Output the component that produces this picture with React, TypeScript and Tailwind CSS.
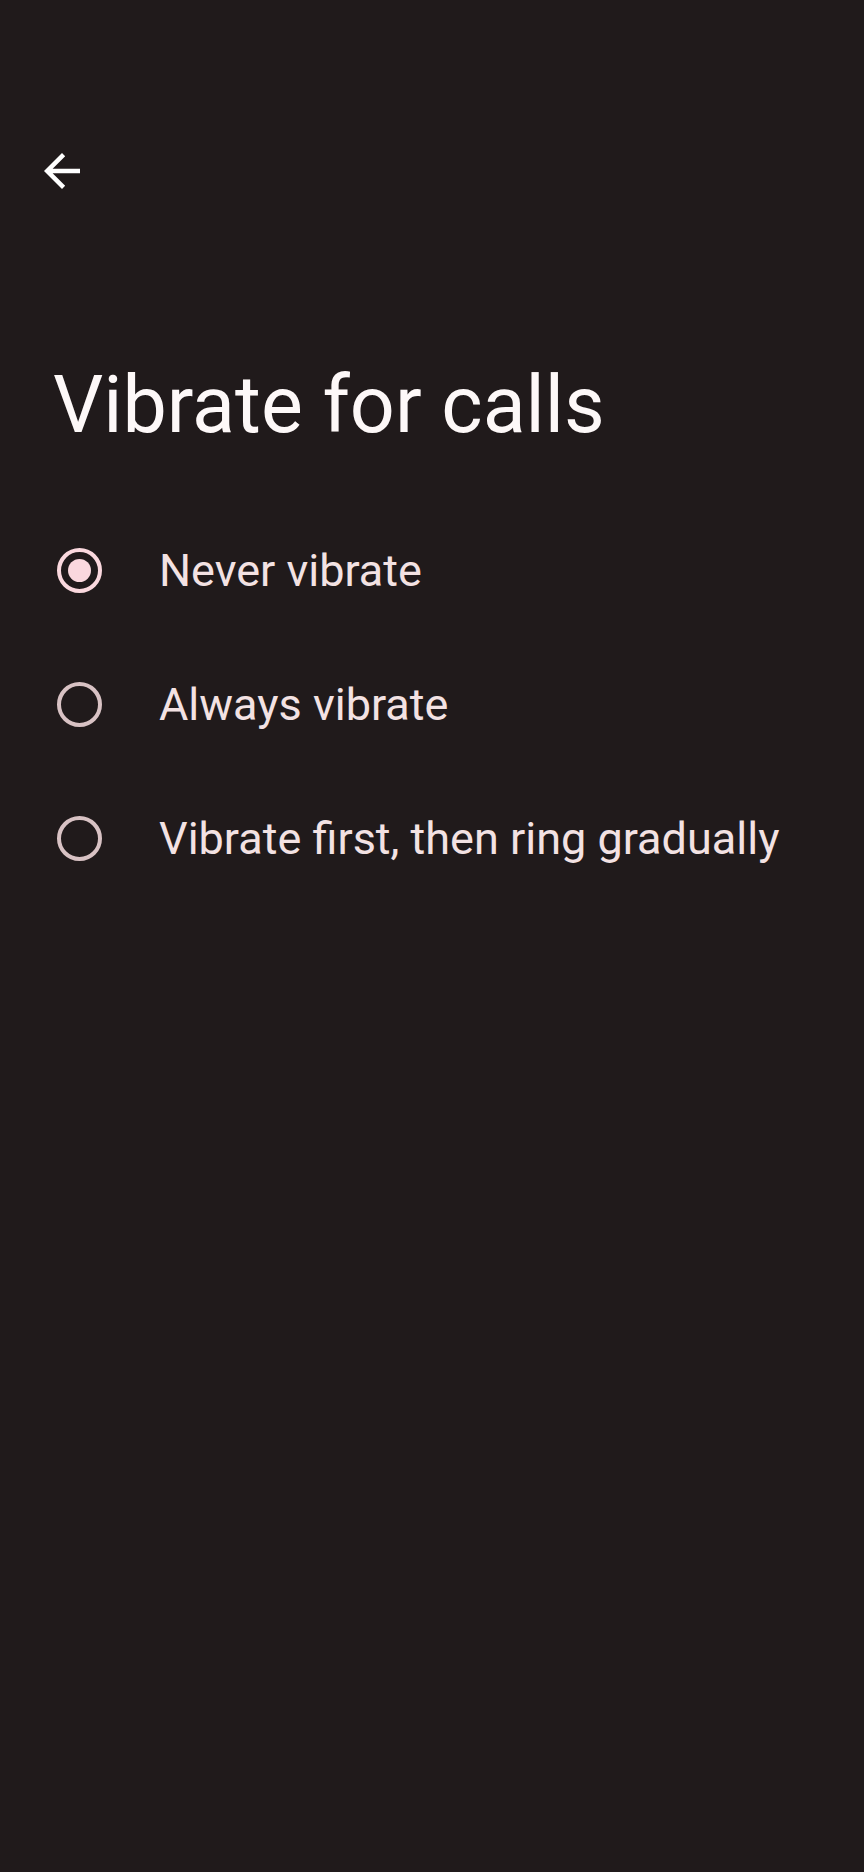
import React from "react";

const options = [
  { label: "Never vibrate", selected: true },
  { label: "Always vibrate", selected: false },
  { label: "Vibrate first, then ring gradually", selected: false },
];

export default function App() {
  return (
    <div
      className="w-[864px] h-[1872px] bg-[#201a1b] overflow-hidden"
      style={{ fontFamily: "Roboto, 'Noto Sans', sans-serif" }}
    >
      <div className="pt-[144px] pl-[35px]">
        <svg width="54" height="54" viewBox="0 0 24 24" fill="#ffffff">
          <path d="M20 11H7.83l5.59-5.59L12 4l-8 8 8 8 1.41-1.41L7.83 13H20v-2z" />
        </svg>
      </div>
      <h1 className="mt-[167px] ml-[53px] text-[79px] leading-[80px] font-normal text-[#fdf8f8]">
        Vibrate for calls
      </h1>
      <div className="mt-[58px] flex flex-col">
        {options.map((o) => (
          <div key={o.label} className="h-[134px] flex items-center">
            <div
              className={
                o.selected
                  ? "ml-[57px] w-[45px] h-[45px] rounded-full border-[4.5px] border-[#fad8de] flex items-center justify-center shrink-0"
                  : "ml-[57px] w-[45px] h-[45px] rounded-full border-[4.5px] border-[#d8c2c4] shrink-0"
              }
            >
              {o.selected && <div className="w-[23px] h-[23px] rounded-full bg-[#fad8de]" />}
            </div>
            <span className="ml-[57px] text-[45px] leading-none text-[#f3e2e3]">{o.label}</span>
          </div>
        ))}
      </div>
    </div>
  );
}
